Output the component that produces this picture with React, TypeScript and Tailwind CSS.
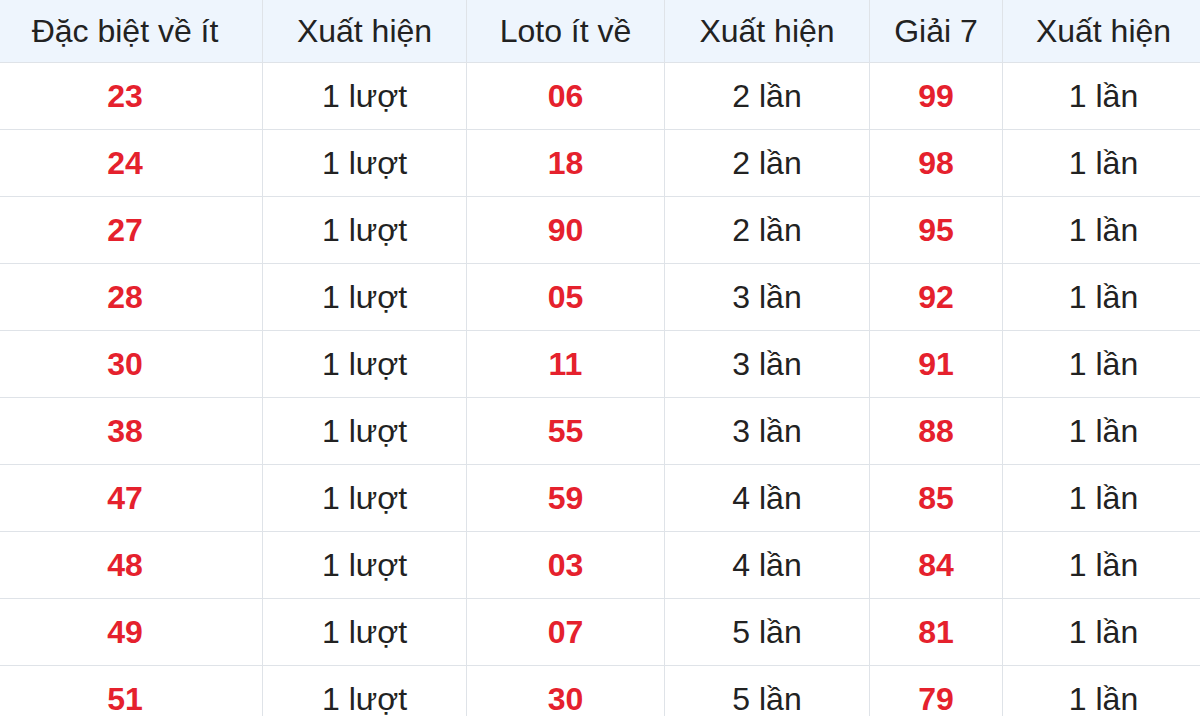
const rows = [
  ['23', '1 lượt', '06', '2 lần', '99', '1 lần'],
  ['24', '1 lượt', '18', '2 lần', '98', '1 lần'],
  ['27', '1 lượt', '90', '2 lần', '95', '1 lần'],
  ['28', '1 lượt', '05', '3 lần', '92', '1 lần'],
  ['30', '1 lượt', '11', '3 lần', '91', '1 lần'],
  ['38', '1 lượt', '55', '3 lần', '88', '1 lần'],
  ['47', '1 lượt', '59', '4 lần', '85', '1 lần'],
  ['48', '1 lượt', '03', '4 lần', '84', '1 lần'],
  ['49', '1 lượt', '07', '5 lần', '81', '1 lần'],
  ['51', '1 lượt', '30', '5 lần', '79', '1 lần'],
];

const headers = ['Đặc biệt về ít', 'Xuất hiện', 'Loto ít về', 'Xuất hiện', 'Giải 7', 'Xuất hiện'];

const cols = 'grid grid-cols-[274px_204px_198px_205px_133px_202px]';

export default function App() {
  return (
    <div className="w-[1200px] h-[716px] overflow-hidden bg-white text-[32px] text-[#222] font-['Liberation_Sans',Arial,sans-serif]">
      <div className="ml-[-12px] w-[1216px]">
        {/* header */}
        <div className={`${cols} h-[63px] bg-[#eef5fd] border-b border-[#dfe3e8]`}>
          {headers.map((h, i) => (
            <div
              key={i}
              className={`flex items-center justify-center whitespace-nowrap ${i > 0 ? 'border-l border-[#dfe3e8]' : ''}`}
            >
              {h}
            </div>
          ))}
        </div>

        {/* rows */}
        {rows.map((r, ri) => (
          <div key={ri} className={`${cols} h-[67px] border-b border-[#dfe3e8]`}>
            {r.map((c, ci) => (
              <div
                key={ci}
                className={`flex items-center justify-center whitespace-nowrap ${ci > 0 ? 'border-l border-[#dfe3e8]' : ''} ${ci % 2 === 0 ? 'font-bold text-[#e5212d]' : ''}`}
              >
                {c}
              </div>
            ))}
          </div>
        ))}
      </div>
    </div>
  );
}
